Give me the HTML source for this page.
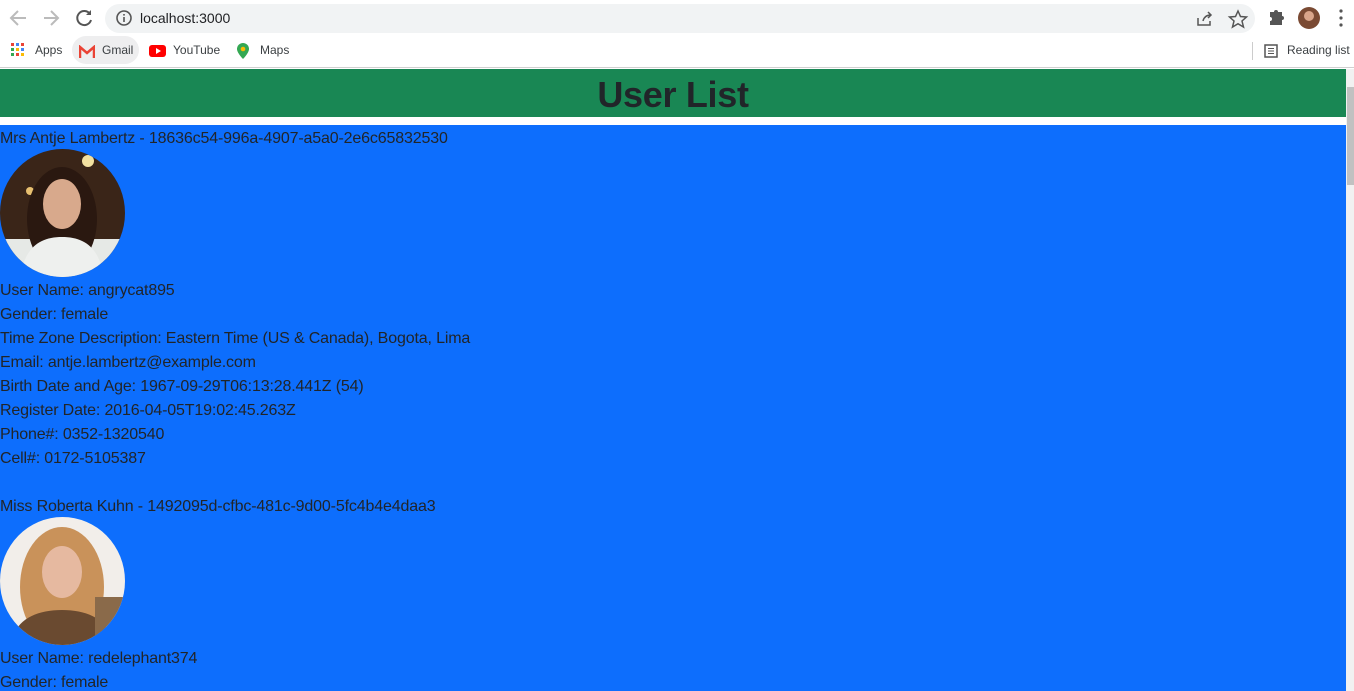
<!DOCTYPE html>
<html><head><meta charset="utf-8"><style>
*{margin:0;padding:0;box-sizing:border-box}
body{width:1354px;height:691px;overflow:hidden;font-family:"Liberation Sans",sans-serif;background:#fff;position:relative}
.top{position:absolute;left:0;top:0;width:1354px;height:36px;background:#fff}
.url{position:absolute;left:105px;top:4px;width:1150px;height:29px;border-radius:15px;background:#f1f3f4}
.url span{position:absolute;left:35px;top:6px;font-size:14px;color:#202124}
.bm{position:absolute;top:36px;left:0;width:1354px;height:32px;background:#fff;border-bottom:1px solid #d0d0d0;font-size:12px;color:#3c4043}
.bm div{position:absolute;top:7px}
.page{position:absolute;top:69px;left:0;width:1346px;height:622px;overflow:hidden}
.hdr{height:48px;background:#198754;text-align:center;font-size:36px;font-weight:bold;color:#212529;line-height:52px;letter-spacing:-0.3px}
.blue{position:absolute;top:56px;left:0;width:1346px;height:600px;background:#0d6efd;color:#212529;font-size:16px;line-height:24px;letter-spacing:-0.15px}
.blue div{position:relative;top:2px}
.av{width:125px;height:128px;display:block}
.sb{position:absolute;top:69px;left:1346px;width:8px;height:622px;background:#f1f1f1}
.sb div{position:absolute;top:18px;left:1px;width:7px;height:98px;background:#c1c1c1}
</style></head><body>
<div class="top">
<svg width="100" height="36" style="position:absolute;left:0;top:0">
<path d="M26 18H12M18 11l-7 7 7 7" stroke="#bbb" stroke-width="2" fill="none"/>
<path d="M44 18h14M51 11l7 7-7 7" stroke="#bbb" stroke-width="2" fill="none"/>
<path d="M90 14a7 7 0 1 0 1 6" stroke="#555" stroke-width="2" fill="none"/><path d="M91 10v5h-5z" fill="#555"/>
</svg>
<div class="url"><svg width="20" height="20" style="position:absolute;left:10px;top:5px"><circle cx="9" cy="9" r="7" stroke="#555" stroke-width="1.6" fill="none"/><rect x="8.2" y="8" width="1.6" height="5" fill="#555"/><rect x="8.2" y="5" width="1.6" height="1.6" fill="#555"/></svg><span>localhost:3000</span>
<svg width="60" height="20" style="position:absolute;left:1090px;top:5px"><path d="M3 9v7h12v-4M8 12c1-4 4-6 8-6M13 3l3 3-3 3" stroke="#555" stroke-width="1.5" fill="none"/><path d="M43 2l2.5 5.5 6 .5-4.5 4 1.5 6-5.5-3.3-5.5 3.3 1.5-6-4.5-4 6-.5z" stroke="#555" stroke-width="1.5" fill="none"/></svg>
</div>
<svg width="90" height="36" style="position:absolute;left:1264px;top:0"><path d="M6 12h4a2 2 0 1 1 4 0h4v4a2 2 0 1 1 0 4v5H6v-4a2 2 0 1 0 0-4z" fill="#555"/><circle cx="45" cy="18" r="11" fill="#7a4a33"/><circle cx="45" cy="16" r="5" fill="#d9a58a"/><circle cx="77" cy="11" r="1.6" fill="#555"/><circle cx="77" cy="18" r="1.6" fill="#555"/><circle cx="77" cy="25" r="1.6" fill="#555"/></svg>
</div>
<div class="bm">
<svg width="16" height="16" style="position:absolute;left:11px;top:7px"><g><rect x="0" y="0" width="3" height="3" fill="#ea4335"/><rect x="5" y="0" width="3" height="3" fill="#4285f4"/><rect x="10" y="0" width="3" height="3" fill="#ea4335"/><rect x="0" y="5" width="3" height="3" fill="#34a853"/><rect x="5" y="5" width="3" height="3" fill="#fbbc05"/><rect x="10" y="5" width="3" height="3" fill="#4285f4"/><rect x="0" y="10" width="3" height="3" fill="#34a853"/><rect x="5" y="10" width="3" height="3" fill="#ea4335"/><rect x="10" y="10" width="3" height="3" fill="#fbbc05"/></g></svg>
<div style="left:35px">Apps</div>
<div style="left:72px;top:0;width:67px;height:28px;border-radius:14px;background:#eeeeef"></div>
<svg width="16" height="14" style="position:absolute;left:79px;top:9px"><path d="M1 13V2l7 6 7-6v11" stroke="#ea4335" stroke-width="2.5" fill="none"/></svg>
<div style="left:102px">Gmail</div>
<svg width="18" height="13" style="position:absolute;left:149px;top:9px"><rect width="17" height="12" rx="3" fill="#f00"/><path d="M7 3l5 3-5 3z" fill="#fff"/></svg>
<div style="left:173px">YouTube</div>
<svg width="14" height="18" style="position:absolute;left:236px;top:6px"><path d="M7 1a6 6 0 0 1 6 6c0 4-6 10-6 10S1 11 1 7a6 6 0 0 1 6-6z" fill="#34a853"/><circle cx="7" cy="7" r="2.3" fill="#fbbc05"/></svg>
<div style="left:260px">Maps</div>
<div style="left:1252px;top:6px;width:1px;height:18px;background:#ccc"></div>
<svg width="14" height="14" style="position:absolute;left:1264px;top:8px"><rect x="1" y="1" width="12" height="12" stroke="#555" stroke-width="1.5" fill="none"/><path d="M4 4.5h6M4 7h6M4 9.5h6" stroke="#555"/></svg>
<div style="left:1287px">Reading list</div>
</div>
<div class="page">
<div class="hdr">User List</div>
<div class="blue">
<div>Mrs Antje Lambertz - 18636c54-996a-4907-a5a0-2e6c65832530</div>
<svg class="av" viewBox="0 0 125 128"><defs><clipPath id="c1"><ellipse cx="62.5" cy="64" rx="62.5" ry="64"/></clipPath></defs><g clip-path="url(#c1)"><rect width="125" height="128" fill="#3a2518"/><circle cx="88" cy="12" r="6" fill="#f3e1a0"/><circle cx="30" cy="42" r="4" fill="#e8c070"/><rect x="0" y="90" width="125" height="40" fill="#e6e9e6"/><ellipse cx="62" cy="70" rx="35" ry="52" fill="#2a1810"/><ellipse cx="62" cy="55" rx="19" ry="25" fill="#d8a98c"/><path d="M20 128c5-30 20-40 42-40s37 10 42 40z" fill="#eef0ee"/></g></svg>
<div>User Name: angrycat895</div>
<div>Gender: female</div>
<div>Time Zone Description: Eastern Time (US &amp; Canada), Bogota, Lima</div>
<div>Email: antje.lambertz@example.com</div>
<div>Birth Date and Age: 1967-09-29T06:13:28.441Z (54)</div>
<div>Register Date: 2016-04-05T19:02:45.263Z</div>
<div>Phone#: 0352-1320540</div>
<div>Cell#: 0172-5105387</div>
<div>&nbsp;</div>
<div>Miss Roberta Kuhn - 1492095d-cfbc-481c-9d00-5fc4b4e4daa3</div>
<svg class="av" viewBox="0 0 125 128"><defs><clipPath id="c2"><ellipse cx="62.5" cy="64" rx="62.5" ry="64"/></clipPath></defs><g clip-path="url(#c2)"><rect width="125" height="128" fill="#f2eeea"/><ellipse cx="62" cy="70" rx="42" ry="60" fill="#c9925a"/><ellipse cx="62" cy="55" rx="20" ry="26" fill="#e6b9a0"/><path d="M10 128c5-25 25-35 52-35s47 10 52 35z" fill="#6a4a30"/><rect x="95" y="80" width="30" height="48" fill="#8a6a4a"/></g></svg>
<div>User Name: redelephant374</div>
<div>Gender: female</div>
</div>
</div>
<div class="sb"><div></div></div>
</body></html>
